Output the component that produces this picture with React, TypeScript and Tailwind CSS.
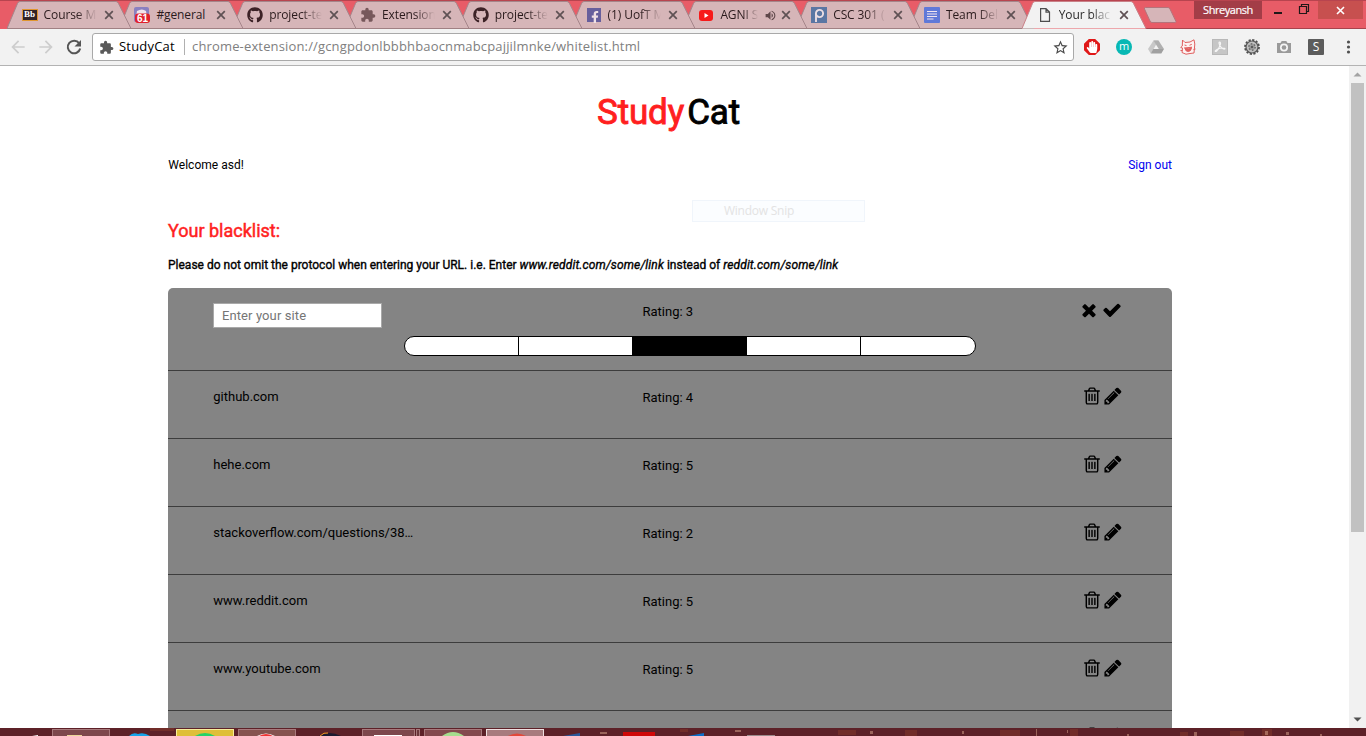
import React from "react";
import { FaGithub, FaFacebookF, FaHandPaper } from "react-icons/fa";
import { MdArrowBack, MdArrowForward, MdStarBorder, MdVolumeUp, MdExtension } from "react-icons/md";

const GLYPHS = {
  check: "M1671 566q0 40-28 68l-724 724-136 136q-28 28-68 28t-68-28l-136-136-362-362q-28-28-28-68t28-68l136-136q28-28 68-28t68 28l294 295 656-657q28-28 68-28t68 28l136 136q28 28 28 68z",
  times: "M1490 1322q0 40-28 68l-136 136q-28 28-68 28t-68-28l-294-294-294 294q-28 28-68 28t-68-28l-136-136q-28-28-28-68t28-68l294-294-294-294q-28-28-28-68t28-68l136-136q28-28 68-28t68 28l294 294 294-294q28-28 68-28t68 28l136 136q28 28 28 68t-28 68l-294 294 294 294q28 28 28 68z",
  pencil: "M491 1536l91-91-235-235-91 91v107h128v128h107zm523-928q0-22-22-22-10 0-17 7l-542 542q-7 7-7 17 0 22 22 22 10 0 17-7l542-542q7-7 7-17zm-54-192l416 416-832 832h-416v-416zm683 96q0 53-37 90l-166 166-416-416 166-165q36-38 90-38 53 0 91 38l235 234q37 39 37 91z",
  trash: "M704 736v576q0 14-9 23t-23 9h-64q-14 0-23-9t-9-23v-576q0-14 9-23t23-9h64q14 0 23 9t9 23zm256 0v576q0 14-9 23t-23 9h-64q-14 0-23-9t-9-23v-576q0-14 9-23t23-9h64q14 0 23 9t9 23zm256 0v576q0 14-9 23t-23 9h-64q-14 0-23-9t-9-23v-576q0-14 9-23t23-9h64q14 0 23 9t9 23zm128 724v-948h-896v948q0 22 7 40.5t14.5 27 10.5 8.5h832q3 0 10.5-8.5t14.5-27 7-40.5zm-672-1076h448l-48-117q-7-9-17-11h-317q-10 2-17 11zm928 32v64q0 14-9 23t-23 9h-96v948q0 83-47 143.5t-113 60.5h-832q-66 0-113-58.5t-47-141.5v-952h-96q-14 0-23-9t-9-23v-64q0-14 9-23t23-9h309l70-167q15-37 54-63t79-26h320q40 0 79 26t54 63l70 167h309q14 0 23 9t9 23z",
};

function Glyph({ name }: { name: keyof typeof GLYPHS }) {
  return (
    <svg viewBox="0 0 1792 1792" className="size-5" fill="#000">
      <path d={GLYPHS[name]} />
    </svg>
  );
}

const blackboard = (
  <span className="flex h-3 w-4 items-center justify-center border border-[#e0962f] bg-[#2f2326] font-['Liberation_Serif',serif] text-[9px] font-bold text-white">Bb</span>
);
const discord = (
  <svg width="16" height="16" viewBox="0 0 16 16">
    <rect width="15" height="15" rx="2" fill="#8a80c0" />
    <path d="M3 4q5-3 9 0l1 6H2z" fill="#f0e4ea" />
    <rect x="1" y="6.500" width="15" height="9.500" rx="3" fill="#e0202c" />
    <text x="8.500" y="15" textAnchor="middle" fontSize="10" fontWeight="bold" fill="#fff" fontFamily="Liberation Sans, sans-serif">61</text>
  </svg>
);
const github = <FaGithub className="size-4 text-[#3c2226]" />;
const facebook = (
  <span className="flex size-3.5 items-end justify-end bg-[#675f9c]">
    <FaFacebookF className="-mb-px size-3 text-[#f0e0e4]" />
  </span>
);
const youtube = (
  <svg width="16" height="16" viewBox="0 0 16 16">
    <rect x="1" y="3" width="14" height="11" rx="3" fill="#f71a1a" />
    <path d="M6.500 6v5l4-2.500z" fill="#fff" />
  </svg>
);
const piazza = (
  <svg width="16" height="16" viewBox="0 0 16 16">
    <rect width="16" height="16" fill="#5b76a3" />
    <circle cx="8.500" cy="6.500" r="3.600" fill="none" stroke="#ecdde2" strokeWidth="1.900" />
    <path d="M5 6.500v8.500" stroke="#ecdde2" strokeWidth="1.900" />
  </svg>
);
const docs = (
  <svg width="16" height="16" viewBox="0 0 16 16">
    <rect width="16" height="16" rx="1" fill="#6079d8" />
    <path d="M3 4.500h10M3 7h10M3 9.500h10M3 12h6.500" stroke="#f2e6ee" strokeWidth="1.200" />
  </svg>
);
const page = (
  <svg width="16" height="16" viewBox="0 0 16 16" fill="none" stroke="#4d4d4d" strokeWidth="1.200">
    <path d="M3.600 1.600h5.400l3.500 3.500v9.300H3.600zM9 1.600v3.500h3.500" />
  </svg>
);

const TABS = [
  { icon: blackboard, label: "Course M" },
  { icon: discord, label: "#general" },
  { icon: github, label: "project-te" },
  { icon: <MdExtension className="size-4 text-[#77585b]" />, label: "Extension" },
  { icon: github, label: "project-te" },
  { icon: facebook, label: "(1) UofT M" },
  { icon: youtube, label: "AGNI S", sound: true },
  { icon: piazza, label: "CSC 301 (" },
  { icon: docs, label: "Team Del" },
  { icon: page, label: "Your blac", active: true },
];

const FADE = "[mask-image:linear-gradient(to_right,#000_60%,transparent_98%)]";

function Tab({ tab, z }: { tab: (typeof TABS)[number]; z: number }) {
  const active = "active" in tab && tab.active;
  const sound = "sound" in tab;
  return (
    <div className="relative flex h-[29px] w-[112.800px] shrink-0 items-center pt-px" style={{ zIndex: active ? 30 : z }}>
      <svg className="absolute left-[-11px] top-0 -z-10" width="125" height="29" viewBox="0 0 125 29">
        <path
          d="M0 28.500 10.500 3.500Q11.300 1.500 13 1.500H109Q110.500 1.500 111.500 3.500L124 28.500z"
          fill={active ? "#f2f2f2" : "#d6b5b8"}
        />
        <path
          d="M0 28.500 10.500 3.500Q11.300 1.500 13 1.500H109Q110.500 1.500 111.500 3.500L124 28.500"
          fill="none"
          stroke={active ? "#c98087" : "#a5858a"}
          strokeWidth="1"
        />
        {!active && <path d="M0 28.500H125" stroke="#a08083" />}
      </svg>
      <span className="ml-1 flex w-4 shrink-0 justify-center">{tab.icon}</span>
      <span
        className={
          "ml-[6px] shrink-0 overflow-hidden whitespace-nowrap text-xs tracking-[-0.100px] " +
          (active ? "text-[#2a2a2a] " : "text-[#2a1a1c] ") +
          (sound ? "w-[39px] " : "w-[54px] ") +
          (tab.label === "#general" ? "" : FADE)
        }
      >
        {tab.label}
      </span>
      {sound && <MdVolumeUp className="ml-[5px] size-[13px] shrink-0 text-[#5f474a]" />}
      <svg className={sound ? "ml-1 size-2.5 shrink-0" : "ml-[6px] size-2.5 shrink-0"} viewBox="0 0 10 10" stroke="#5f5154" strokeWidth="1.700">
        <path d="M1.200 1.200l7.600 7.600M8.800 1.200L1.200 8.800" />
      </svg>
    </div>
  );
}

function TabStrip() {
  return (
    <header className="relative flex h-[29px] shrink-0 border-t border-[#b8444f] bg-[#e85c67]">
      <div className="-mt-px flex pl-[17.600px]">
        {TABS.map((t, i) => (
          <Tab key={i} tab={t} z={20 - i} />
        ))}
      </div>
      <svg className="-ml-[3px] mt-[6px]" width="35" height="17" viewBox="0 0 35 17">
        <path d="M2.500.5H25Q26.500.5 27 2L33 14.500Q33 15.500 32 15.500H9Q7.500 15.500 7 14L1.500 2Q1 .5 2.500.5z" fill="#d6b5b8" stroke="#b5737b" />
      </svg>
      <div className="ml-auto mr-[3px] flex">
        <div className="flex h-[18px] w-[68px] items-center justify-center bg-[#a33d47] text-[11px] tracking-[-0.450px] text-white [-webkit-text-stroke:0.200px_white]">
          Shreyansh
        </div>
        <div className="flex h-[18px] w-8 items-center justify-center">
          <span className="mt-[5px] h-0.5 w-2 bg-[#201818]" />
        </div>
        <svg className="mt-[2px]" width="24" height="12" viewBox="0 0 24 12" fill="none" stroke="#201818">
          <path d="M5.500 3.500h7v7h-7zM7.500 3.500v-2h7v7h-2" strokeWidth="1.200" />
        </svg>
        <div className="flex h-[18px] w-[45px] items-center justify-center bg-[#c7504f] pr-px">
          <svg width="9" height="9" viewBox="0 0 9 9" stroke="#fff" strokeWidth="1.600">
            <path d="M1 1l7 7M8 1L1 8" />
          </svg>
        </div>
      </div>
      <div className="absolute bottom-0 right-0 h-px w-[221px] bg-[#a8434d]" />
    </header>
  );
}

function Toolbar() {
  return (
    <div className="flex h-[37px] shrink-0 items-center border-b border-[#b3b3b3] bg-[#f2f2f2] pl-2">
      <MdArrowBack className="size-5 text-[#cdcdcd]" />
      <MdArrowForward className="ml-2 size-5 text-[#cdcdcd]" />
      <svg className="ml-2 size-5" viewBox="0 0 20 20">
        <path d="M15.200 6.300A6.300 6.300 0 1 0 16.200 11.500" fill="none" stroke="#555" strokeWidth="2" />
        <path d="M17 3v6.500h-6.500z" fill="#555" />
      </svg>
      <div className="ml-2 flex h-7 w-[982px] items-center rounded-[3px] border border-[#a9a9a9] bg-white pl-[6px] text-[13px]">
        <MdExtension className="size-[15px] text-[#5a5a5a]" />
        <span className="ml-[5px] w-[58px] whitespace-nowrap tracking-[0.200px] text-black">StudyCat</span>
        <span className="ml-[7px] h-4 w-px bg-[#b0b0b0]" />
        <span className="ml-[7px] whitespace-nowrap tracking-[0.155px] text-[#808080]">chrome-extension://gcngpdonlbbbhbaocnmabcpajjilmnke/whitelist.html</span>
        <MdStarBorder className="ml-auto mr-[4px] size-[17px] text-[#4a4a4a]" />
      </div>
      <div className="ml-[10px] flex items-center gap-4">
        <span className="flex size-4 items-center justify-center bg-[#e01818] [clip-path:polygon(30%_0,70%_0,100%_30%,100%_70%,70%_100%,30%_100%,0_70%,0_30%)]">
          <FaHandPaper className="size-3 text-white" />
        </span>
        <span className="flex size-4 items-center justify-center rounded-full bg-[#08b8b4] pb-0.5 text-[11px] text-white">m</span>
        <svg width="16" height="16" viewBox="0 0 16 16">
          <path d="M5.500 1.500h5L5 11 2.700 14.500 0 10z" fill="#c8c8c8" />
          <path d="M5.500 1.500h5L16 10h-5.200z" fill="#b0b0b0" />
          <path d="M5.300 10H16l-2.700 4.500H2.700z" fill="#a0a0a0" />
        </svg>
        <svg width="16" height="16" viewBox="0 0 16 16" fill="none" stroke="#e06060">
          <path d="M2.500 1l2.500 2.500 5-.5L14 .8l.8 4.200-.8 9-4 .5-4 .7-4-1.700.5-4.500-1.800-.5L2.300 7z" fill="#fdf3f2" />
          <path d="M4.500 6l2 .6M9.500 6.300l2.300-1M4 9l8-.8" />
          <path d="M5 9.500q3.500.8 6.500-.8-.5 3.800-3.200 3.900Q5.500 12.500 5 9.500z" fill="#e06060" />
          <path d="M.5 11.500h2M13.500 10.500l2-.5" />
        </svg>
        <span className="flex size-4 items-center justify-center border border-[#b8b8b8] bg-[#c6c6c6]">
          <svg width="12" height="12" viewBox="0 0 12 12" fill="none" stroke="#f6f6f6" strokeWidth="1.200">
            <path d="M5.500 1.200q1.500 0 .8 2.500Q5 8 2.500 10.200q-1.500.7-1.200-.4Q3 7.500 8 7q3 0 3 .8-1 .8-3.500-1Q5.200 4.500 5 2q0-.8.500-.8z" />
          </svg>
        </span>
        <svg width="16" height="16" viewBox="0 0 16 16">
          <circle cx="8" cy="8" r="7" fill="none" stroke="#505050" strokeWidth="1.800" strokeDasharray="2.200 1.465" />
          <circle cx="8" cy="8" r="6" fill="#c0c0c0" stroke="#5a5a5a" strokeWidth="1.200" />
          <circle cx="8" cy="8" r="3.200" fill="#a0a0a0" stroke="#6a6a6a" strokeWidth="1.400" strokeDasharray="1.600 1.750" />
          <circle cx="8" cy="8" r="1.300" fill="#5a5a5a" />
        </svg>
        <svg width="16" height="16" viewBox="0 0 16 16">
          <path d="M1 4h3.500l1.200-2h4.600l1.200 2H15v10H1z" fill="#9a9a9a" />
          <circle cx="8" cy="8.500" r="4" fill="#f5f5f5" />
          <circle cx="8" cy="8.500" r="2.300" fill="#9a9a9a" />
        </svg>
        <span className="flex size-4 items-center justify-center rounded-[1px] bg-[#5c5c5c] text-xs text-white">S</span>
        <svg width="16" height="16" viewBox="0 0 16 16" fill="#505050">
          <circle cx="8.500" cy="3" r="1.600" />
          <circle cx="8.500" cy="8" r="1.600" />
          <circle cx="8.500" cy="13" r="1.600" />
        </svg>
      </div>
    </div>
  );
}

const SITES = [
  { url: "github.com", rating: 4 },
  { url: "hehe.com", rating: 5 },
  { url: "stackoverflow.com/questions/38…", rating: 2 },
  { url: "www.reddit.com", rating: 5 },
  { url: "www.youtube.com", rating: 5 },
  { url: "www.twitter.com", rating: 3 },
];

function NewSiteRow() {
  return (
    <div className="h-[83px] border-b border-[#3c3c3c] pl-[45px] pt-[15px]">
      <div className="flex">
        <input
          className="h-[25px] w-[169px] border border-[#a9a9a9] bg-white px-2 text-[13px] tracking-[0.1px] outline-none placeholder:text-[#757575]"
          placeholder="Enter your site"
        />
        <span className="ml-[260.500px] text-[13px] leading-[17px]">Rating: 3</span>
        <span className="ml-auto mr-[50px] -mt-[3px] flex gap-[3px]">
          <Glyph name="times" />
          <Glyph name="check" />
        </span>
      </div>
      <div className="ml-[191px] mt-2 flex h-5 w-[572px] overflow-hidden rounded-full border border-black bg-white">
        {[1, 2, 3, 4, 5].map((n) => (
          <span
            key={n}
            className={n === 3 ? "w-[114px] border-r border-black bg-black" : n === 5 ? "w-[114px]" : "w-[114px] border-r border-black"}
          />
        ))}
      </div>
    </div>
  );
}

function SiteRow({ url, rating }: { url: string; rating: number }) {
  return (
    <div className="flex h-[68px] shrink-0 border-b border-[#3c3c3c] pl-[45.300px] pt-[15px] text-[13px]">
      <span className="w-[429.200px] leading-[21px]">{url}</span>
      <span className="leading-[23px]">Rating: {rating}</span>
      <span className="ml-auto mr-[49px] flex gap-px">
        <Glyph name="trash" />
        <Glyph name="pencil" />
      </span>
    </div>
  );
}

function Content() {
  return (
    <main className="h-full w-[1004px] ml-[168px] font-['Roboto',sans-serif] text-black">
      <h1 className="pt-[22px] pr-[3px] text-center text-[35px] leading-[50px] tracking-[-0.150px] [-webkit-text-stroke:0.900px_currentColor]">
        <span className="text-[#ff1f1f]">Study</span>
        <span className="ml-[3px]">Cat</span>
      </h1>
      <div className="mt-[19px] flex justify-between text-xs leading-4">
        <span className="pl-[0.300px] tracking-[0.020px]">Welcome asd!</span>
        <a className="text-[#0000ee]">Sign out</a>
      </div>
      <h2 className="mt-[46px] text-[18px] leading-6 text-[#ff1f1f] [-webkit-text-stroke:0.500px_currentColor]">Your blacklist:</h2>
      <p className="mt-[14px] text-xs leading-4 [-webkit-text-stroke:0.350px_currentColor]">
        Please do not omit the protocol when entering your URL. i.e. Enter <i className="tracking-[0.140px]">www.reddit.com/some/link</i> instead of{" "}
        <i className="tracking-[0.140px]">reddit.com/some/link</i>
      </p>
      <section className="mt-[15px] rounded-t-[5px] bg-[#848484]">
        <NewSiteRow />
        {SITES.map((s) => (
          <SiteRow key={s.url} {...s} />
        ))}
      </section>
    </main>
  );
}

function Scrollbar() {
  return (
    <aside className="ml-auto flex w-[17px] flex-col items-center bg-[#f1f1f1]">
      <svg width="17" height="17" viewBox="0 0 17 17">
        <path d="M4.500 10.500h8l-4-4z" fill="#a3a3a3" />
      </svg>
      <div className="h-[449px] w-[13px] bg-[#c1c1c1]" />
      <svg className="mt-auto" width="17" height="17" viewBox="0 0 17 17">
        <path d="M4.500 6.500h8l-4 4z" fill="#505050" />
      </svg>
    </aside>
  );
}

function Taskbar() {
  const box = "h-2 shrink-0 border border-b-0 ";
  return (
    <footer className="relative h-2 shrink-0 overflow-hidden bg-[#5d2128]">
      <div className="flex h-2 pt-px pl-[52px]">
        <span className={box + "w-[58px] border-[#a8797c] bg-[#7d474c]"} />
        <span className={box + "ml-[66px] w-[58px] border-[#f8ee9c] bg-[#dfbf38]"} />
        <span className={box + "ml-1 w-[58px] border-[#a8797c] bg-[#85534f]"} />
        <span className={box + "ml-[66px] w-[53px] border-[#a8797c] bg-[#7d474c]"} />
        <span className={box + "ml-px w-1 border-[#a8797c] bg-[#6d373c]"} />
        <span className={box + "ml-1 w-[58px] border-[#a8797c] bg-[#83494e]"} />
        <span className={box + "ml-1 w-[58px] border-[#efdfe0] bg-[#a87b7e]"} />
      </div>
      <svg className="absolute left-0 top-0" width="1366" height="8" viewBox="0 0 1366 8">
        <path d="M32 8l6-1v1z" fill="#fff" />
        <path d="M67 7h15v1H67z" fill="#ecd79a" />
        <path d="M129 8q4-4 9-2 6-2 12 2z" fill="#14a3ea" />
        <path d="M195 8q10-6 20 0z" fill="#25d366" />
        <path d="M257 8q9-5 18 0z" fill="#fff" />
        <path d="M259 8q7-4 14 0z" fill="#e33" />
        <path d="M319 8q10-6 22 0z" fill="#1c1a30" />
        <path d="M320 8q4-4 8-3" stroke="#f39a1f" fill="none" />
        <path d="M374 7h28v1h-28z" fill="#fff" />
        <path d="M442 8q11-8 22 0z" fill="#a5dd8e" />
        <path d="M508 8q9-5 18 0z" fill="#e3483a" />
        <path d="M563 8l17-3v3z" fill="#2b579a" />
        <path d="M623 4h32v4h-32z" fill="#d00808" />
        <path d="M688 8l16-3v3z" fill="#0c6fcb" />
        <path d="M747 7h28v1h-28z" fill="#9a8a8a" />
        <g fill="#a04a30" opacity=".3">
          <path d="M150 0h24v3h-24zM1000 2h20v6h-20zM1070 1h8v7h-8zM1180 4h8v4h-8zM1262 1h10v7h-10zM680 1h8v3h-8zM838 2h18v5h-18zM1230 3h14v5h-14zM905 2h12v6h-12z" />
        </g>
        <g fill="#d9a58c" opacity=".5">
          <path d="M1036 1h1v7h-1zM1067 2h1v3h-1zM1127 6h2v2h-2zM1194 4h3v4h-3zM1265 3h3v4h-3zM1286 4h3v3h-3zM1320 6h2v2h-2zM600 4h7v2h-7zM735 2h6v2h-6zM870 3h3v3h-3zM962 3h2v3h-2z" />
        </g>
      </svg>
    </footer>
  );
}

export default function App() {
  return (
    <div className="relative isolate flex h-[736px] w-[1366px] flex-col overflow-hidden bg-white font-['Open_Sans','Noto_Sans',sans-serif]">
      <TabStrip />
      <Toolbar />
      <div className="flex h-[662px] shrink-0 overflow-hidden">
        <Content />
        <Scrollbar />
      </div>
      <Taskbar />
      <div className="absolute left-[692px] top-[200px] flex h-[22px] w-[173px] items-center border border-[#f0f5fb] bg-[#fbfdff] pl-[31px] text-xs tracking-[-0.250px] text-[#e3e3e3]">
        Window Snip
      </div>
    </div>
  );
}
